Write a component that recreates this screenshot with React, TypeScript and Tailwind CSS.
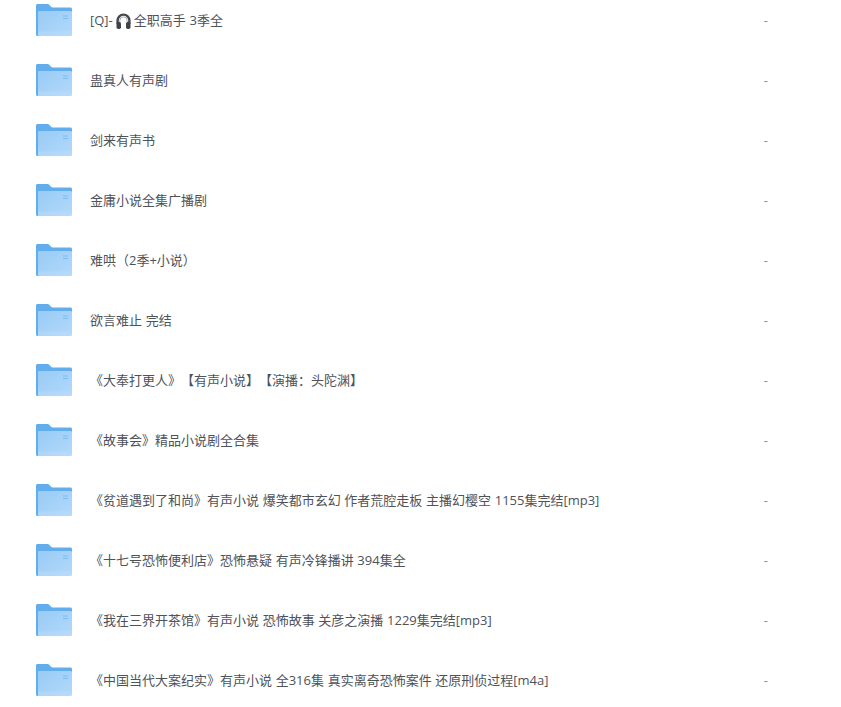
import React from "react";

const files = [
  "蛊真人有声剧",
  "剑来有声书",
  "金庸小说全集广播剧",
  "难哄（2季+小说）",
  "欲言难止 完结",
  "《大奉打更人》【有声小说】【演播：头陀渊】",
  "《故事会》精品小说剧全合集",
  "《贫道遇到了和尚》有声小说 爆笑都市玄幻 作者荒腔走板 主播幻樱空 1155集完结[mp3]",
  "《十七号恐怖便利店》恐怖悬疑 有声冷锋播讲 394集全",
  "《我在三界开茶馆》有声小说 恐怖故事 关彦之演播 1229集完结[mp3]",
  "《中国当代大案纪实》有声小说 全316集 真实离奇恐怖案件 还原刑侦过程[m4a]",
];

const FolderIcon = () => (
  <svg width="36" height="36" viewBox="0 0 36 36" className="shrink-0">
    <defs>
      <linearGradient id="folderFront" x1="0" y1="0" x2="1" y2="1">
        <stop offset="0" stopColor="#98cbf5" />
        <stop offset="1" stopColor="#b3d9fb" />
      </linearGradient>
    </defs>
    <path d="M0 3.500C0 2.700.7 2 1.500 2h10.700l3.800 3.400h18.500c.8 0 1.500.7 1.500 1.500V10H2v24H1.500C.7 34 0 33.300 0 32.500z" fill="#62aeec" />
    <path d="M2 9h32.500c.8 0 1.500.7 1.500 1.500v22c0 .8-.7 1.500-1.500 1.500H2z" fill="url(#folderFront)" />
    <rect x="2" y="29.500" width="34" height="4.500" fill="#bfe0fc" opacity="0.35" />
    <rect x="27" y="13.500" width="5" height="1" fill="#7fbcf0" />
    <rect x="27" y="16" width="5" height="1" fill="#7fbcf0" />
  </svg>
);

const Headphones = () => (
  <svg width="15" height="16" viewBox="0 0 15 16" className="ml-[3px] mr-[3px] shrink-0">
    <path d="M1.600 11V7.500a5.900 5.900 0 0 1 11.800 0V11" fill="none" stroke="#44474f" strokeWidth="2.400" />
    <path d="M3.800 10V7.600a3.700 3.700 0 0 1 7.400 0V10" fill="none" stroke="#a9acb3" strokeWidth="1" />
    <rect x="0.500" y="9" width="4.500" height="7" rx="1.800" fill="#3f4249" />
    <rect x="10" y="9" width="4.500" height="7" rx="1.800" fill="#3f4249" />
  </svg>
);

const Row = ({ children }: { children: React.ReactNode }) => (
  <div className="flex h-[60px] items-center pl-9 pr-[73px]">
    <FolderIcon />
    <div className="ml-[18px] flex flex-1 items-center whitespace-pre pt-px text-[13px] text-[#4e5259] [text-spacing-trim:space-all] [word-spacing:0.3px]">
      {children}
    </div>
    <span className="pt-px text-[13px] text-[#8a8d93]">-</span>
  </div>
);

export default function App() {
  return (
    <div className="h-screen overflow-hidden bg-white font-['Open_Sans','Noto_Sans_CJK_SC',sans-serif]">
      <div className="-mt-[10px]">
        <Row>
          [Q]-
          <Headphones />
          全职高手 3季全
        </Row>
        {files.map((name) => (
          <Row key={name}>{name}</Row>
        ))}
      </div>
    </div>
  );
}
